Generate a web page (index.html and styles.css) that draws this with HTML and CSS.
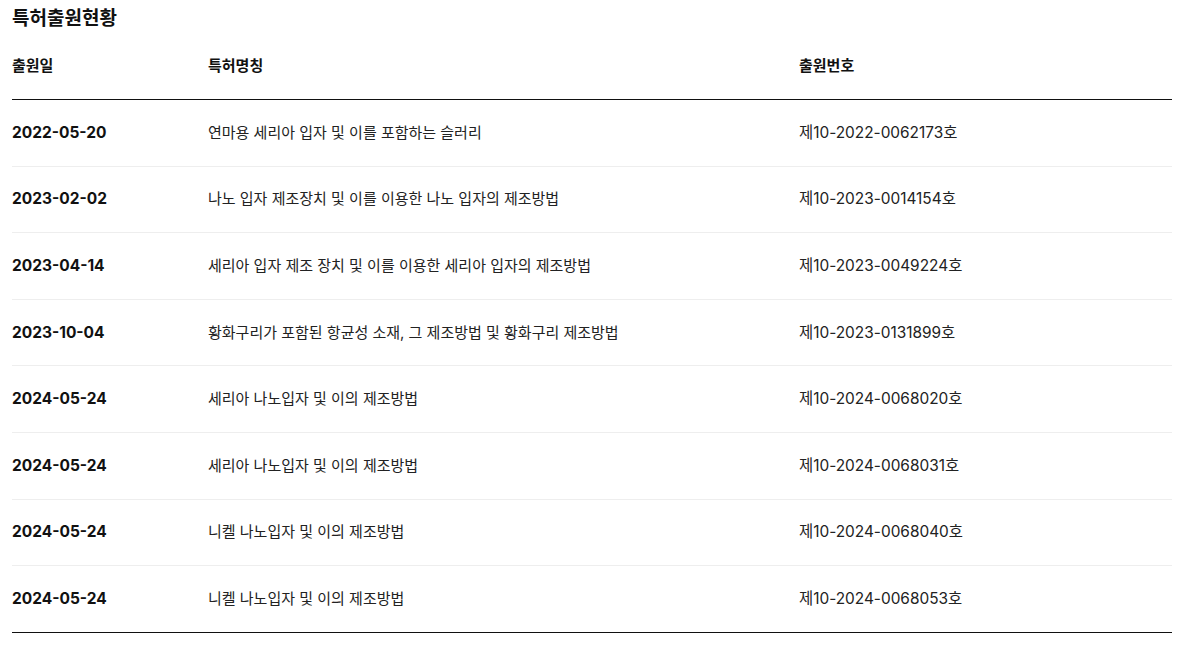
FILE: index.html
```html
<!DOCTYPE html>
<html lang="ko">
<head>
<meta charset="utf-8">
<link rel="stylesheet" href="styles.css">
</head>
<body>
<section class="patents">
  <h2 class="title">특허출원현황</h2>
  <div class="table">
    <div class="row head">
      <div class="c-date">출원일</div>
      <div class="c-name">특허명칭</div>
      <div class="c-no">출원번호</div>
    </div>
    <div class="row">
      <div class="c-date">2022-05-20</div>
      <div class="c-name">연마용 세리아 입자 및 이를 포함하는 슬러리</div>
      <div class="c-no">제10-2022-0062173호</div>
    </div>
    <div class="row">
      <div class="c-date">2023-02-02</div>
      <div class="c-name">나노 입자 제조장치 및 이를 이용한 나노 입자의 제조방법</div>
      <div class="c-no">제10-2023-0014154호</div>
    </div>
    <div class="row">
      <div class="c-date">2023-04-14</div>
      <div class="c-name">세리아 입자 제조 장치 및 이를 이용한 세리아 입자의 제조방법</div>
      <div class="c-no">제10-2023-0049224호</div>
    </div>
    <div class="row">
      <div class="c-date">2023-10-04</div>
      <div class="c-name">황화구리가 포함된 항균성 소재, 그 제조방법 및 황화구리 제조방법</div>
      <div class="c-no">제10-2023-0131899호</div>
    </div>
    <div class="row">
      <div class="c-date">2024-05-24</div>
      <div class="c-name">세리아 나노입자 및 이의 제조방법</div>
      <div class="c-no">제10-2024-0068020호</div>
    </div>
    <div class="row">
      <div class="c-date">2024-05-24</div>
      <div class="c-name">세리아 나노입자 및 이의 제조방법</div>
      <div class="c-no">제10-2024-0068031호</div>
    </div>
    <div class="row">
      <div class="c-date">2024-05-24</div>
      <div class="c-name">니켈 나노입자 및 이의 제조방법</div>
      <div class="c-no">제10-2024-0068040호</div>
    </div>
    <div class="row last">
      <div class="c-date">2024-05-24</div>
      <div class="c-name">니켈 나노입자 및 이의 제조방법</div>
      <div class="c-no">제10-2024-0068053호</div>
    </div>
  </div>
</section>
</body>
</html>
```
FILE: styles.css
```css
html, body {
  margin: 0;
  padding: 0;
  background: #fff;
}
body {
  font-family: Inter, "Noto Sans CJK KR", sans-serif;
  color: #222;
}
.patents {
  padding: 6px 19px 0 12px;
}
.title {
  margin: 0;
  font-size: 19px;
  font-weight: 700;
  line-height: 26px;
  color: #111;
}
.table {
  display: flex;
  flex-direction: column;
  margin-top: 1px;
  border-bottom: 1px solid #111;
}
.row {
  display: grid;
  grid-template-columns: 196px 591px 1fr;
  align-items: center;
  height: 65.6px;
  border-bottom: 1px solid #eee;
  font-size: 15px;
  line-height: 20px;
}
.row.last {
  border-bottom: none;
}
.row.head {
  height: 66px;
  border-bottom: 1px solid #111;
  font-weight: 700;
  color: #111;
}
.c-no {
  font-size: 15.4px;
}
.c-date {
  font-weight: 700;
  font-size: 15.5px;
  color: #111;
}
.head .c-date,
.head .c-no {
  font-size: 15px;
}
```
